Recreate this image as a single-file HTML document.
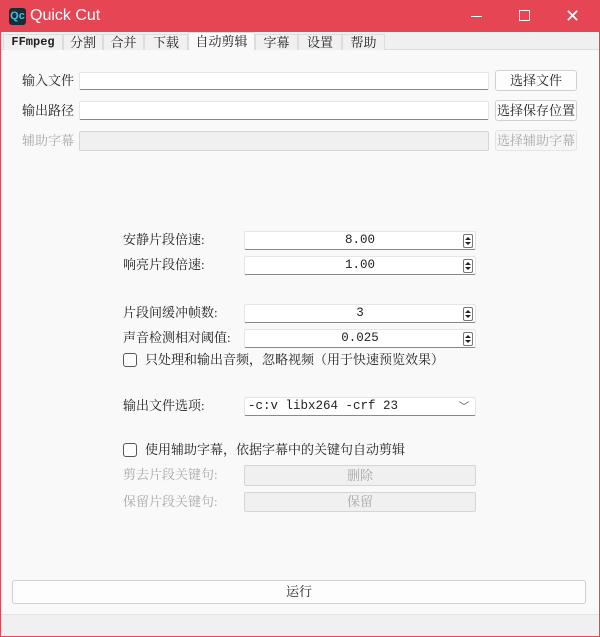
<!DOCTYPE html>
<html><head><meta charset="utf-8"><style>
*{box-sizing:border-box;margin:0;padding:0}
body{width:600px;height:637px;overflow:hidden;background:#e64553;font-family:"Liberation Serif","Noto Serif CJK SC",serif;font-size:13px;line-height:16px;color:#222;position:relative}
.a{position:absolute}
.win{left:1px;top:32px;width:598px;height:604px;background:#f9f9f9}
.title{left:0;top:0;width:600px;height:32px;color:#fff;font-family:"Liberation Sans",sans-serif;font-size:15px}
.tabbar{left:1px;top:32px;width:598px;height:18px;background:#f0f0f0;border-bottom:1px solid #ddd}
.tab{top:34px;height:16px;border:1px solid #dcdcdc;border-bottom:none;background:#f0f0f0;text-align:center;line-height:15px;font-size:13px}
.inp{background:#fff;border:1px solid #e5e5e5;border-bottom:1px solid #888;border-radius:2px}
.btn{background:#fdfdfd;border:1px solid #d0d0d0;border-radius:3px;text-align:center;font-size:13px}
.dis{color:#a8a8a8}
.dbox{background:#f0f0f0;border:1px solid #d5d5d5;border-radius:2px}
.spin{background:#fff;border:1px solid #e5e5e5;border-bottom:1px solid #888;border-radius:2px;text-align:center;font-family:"Liberation Mono",monospace;font-size:12.5px;line-height:17px}
.arr{position:absolute;right:2px;top:2px;width:10px;height:14px;border:1px solid #777;border-radius:2px;background:#fff}
.arr:before{content:"";position:absolute;left:1px;top:2px;border:3px solid transparent;border-bottom:3px solid #222;border-top:none}
.arr:after{content:"";position:absolute;left:1px;bottom:2px;border:3px solid transparent;border-top:3px solid #222;border-bottom:none}
.cb{width:14px;height:14px;border:1px solid #555;border-radius:3px;background:#fff}
</style></head><body>
<div class="a title">
 <div class="a" style="left:9px;top:8px;width:17px;height:17px;background:#1d2b36;border-radius:3px;color:#3fc1e0;font-size:11px;line-height:17px;text-align:center;font-weight:bold">Qc</div>
 <div class="a" style="left:30px;top:7px;font-size:16px;line-height:18px">Quick Cut</div>
 <div class="a" style="left:471px;top:16px;width:11px;height:1px;background:#fff"></div>
 <div class="a" style="left:519px;top:10px;width:11px;height:11px;border:1px solid #fff"></div>
 <div class="a" style="left:565px;top:6px;font-size:18px;line-height:20px">✕</div>
</div>
<div class="a win"></div>
<div class="a tabbar"></div>
<div class="a tab" style="left:3px;width:60px;font-family:'Liberation Mono',monospace;font-weight:bold;font-size:12px">FFmpeg</div>
<div class="a tab" style="left:63px;width:40px">分割</div>
<div class="a tab" style="left:103px;width:41px">合并</div>
<div class="a tab" style="left:144px;width:44px">下载</div>
<div class="a tab" style="left:188px;width:67px;top:32px;height:18px;background:#f9f9f9;line-height:17px">自动剪辑</div>
<div class="a tab" style="left:255px;width:43px">字幕</div>
<div class="a tab" style="left:298px;width:44px">设置</div>
<div class="a tab" style="left:342px;width:43px">帮助</div>

<div class="a" style="left:22px;top:73px">输入文件</div>
<div class="a inp" style="left:79px;top:72px;width:410px;height:18px"></div>
<div class="a btn" style="left:495px;top:70px;width:82px;height:21px;line-height:19px">选择文件</div>
<div class="a" style="left:22px;top:103px">输出路径</div>
<div class="a inp" style="left:79px;top:101px;width:410px;height:19px"></div>
<div class="a btn" style="left:495px;top:100px;width:82px;height:21px;line-height:19px">选择保存位置</div>
<div class="a dis" style="left:22px;top:133px">辅助字幕</div>
<div class="a dbox" style="left:79px;top:131px;width:410px;height:20px"></div>
<div class="a btn dis" style="left:495px;top:130px;width:82px;height:21px;line-height:19px;background:#f6f6f6;border-color:#e4e4e4">选择辅助字幕</div>

<div class="a" style="left:123px;top:232px">安静片段倍速:</div>
<div class="a spin" style="left:244px;top:231px;width:232px;height:19px">8.00<div class="arr"></div></div>
<div class="a" style="left:123px;top:257px">响亮片段倍速:</div>
<div class="a spin" style="left:244px;top:256px;width:232px;height:19px">1.00<div class="arr"></div></div>
<div class="a" style="left:123px;top:305px">片段间缓冲帧数:</div>
<div class="a spin" style="left:244px;top:304px;width:232px;height:19px">3<div class="arr"></div></div>
<div class="a" style="left:123px;top:330px">声音检测相对阈值:</div>
<div class="a spin" style="left:244px;top:329px;width:232px;height:19px">0.025<div class="arr"></div></div>
<div class="a cb" style="left:123px;top:353px"></div>
<div class="a" style="left:145px;top:352px">只处理和输出音频，忽略视频（用于快速预览效果）</div>

<div class="a" style="left:123px;top:398px">输出文件选项:</div>
<div class="a inp" style="left:244px;top:397px;width:232px;height:19px;font-family:'Liberation Mono',monospace;font-size:12.5px;line-height:17px;padding-left:3px">-c:v libx264 -crf 23<span class="a" style="right:6px;top:2px;font-size:10px;color:#444">﹀</span></div>

<div class="a cb" style="left:123px;top:443px"></div>
<div class="a" style="left:145px;top:442px">使用辅助字幕，依据字幕中的关键句自动剪辑</div>
<div class="a dis" style="left:123px;top:467px">剪去片段关键句:</div>
<div class="a dbox dis" style="left:244px;top:465px;width:232px;height:21px;text-align:center;line-height:19px">删除</div>
<div class="a dis" style="left:123px;top:494px">保留片段关键句:</div>
<div class="a dbox dis" style="left:244px;top:492px;width:232px;height:20px;text-align:center;line-height:18px">保留</div>

<div class="a btn" style="left:12px;top:580px;width:574px;height:24px;line-height:22px">运行</div>
<div class="a" style="left:1px;top:614px;width:598px;height:22px;background:#f0f0f0;border-top:1px solid #e4e4e4"></div>
</body></html>
